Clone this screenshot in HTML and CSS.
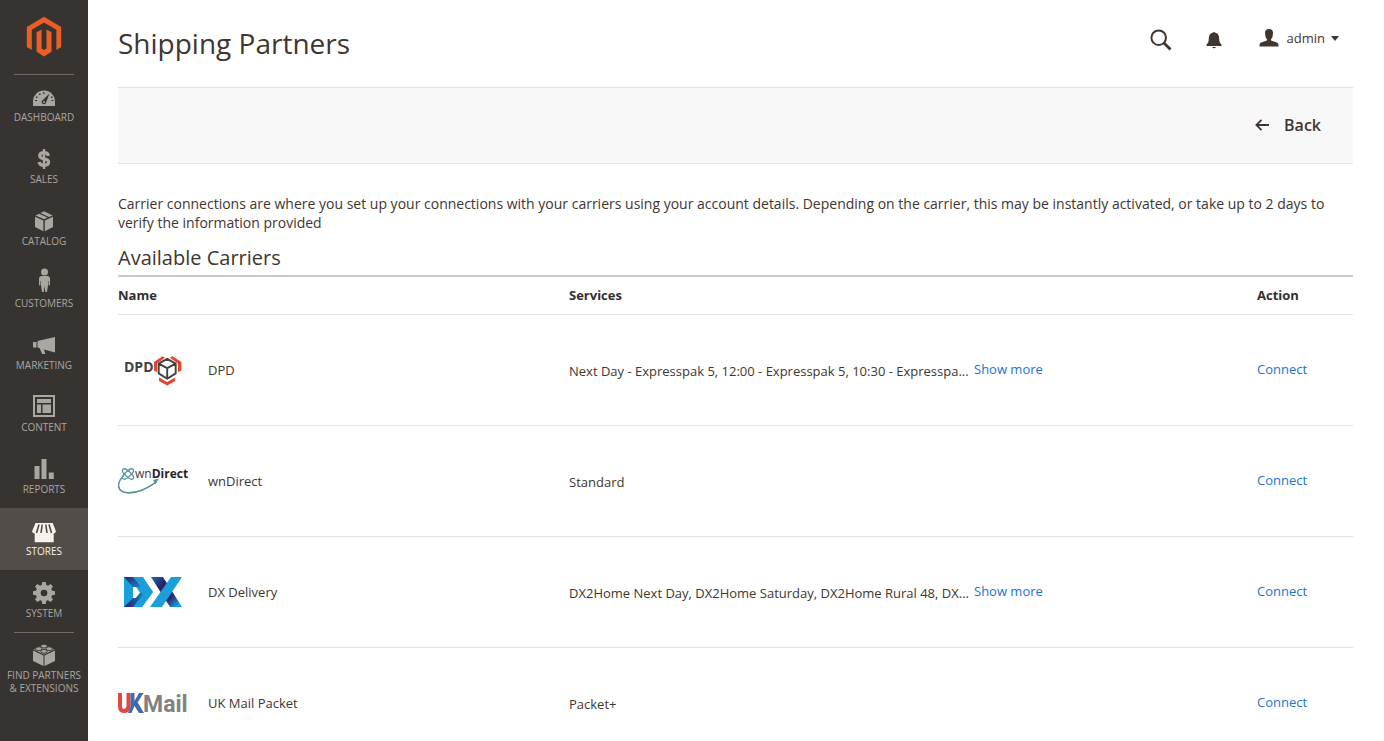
FILE: index.html
```html
<!DOCTYPE html>
<html lang="en">
<head>
<meta charset="utf-8">
<meta name="viewport" content="width=device-width, initial-scale=1">
<title>Shipping Partners</title>
<link rel="stylesheet" href="styles.css">
</head>
<body>
<div class="page">
  <aside class="sidebar">
    <a class="brand" href="#" aria-label="Home">
      <svg width="36" height="42" viewBox="0 0 36 42" fill="#eb5f25"><path d="M18 .8 35.200 11v20l-4.800 2.900V13.800L18 6.500 5.800 13.800v20.100L.8 31V11z"/><path d="M10.600 16.300 15.600 13.400v19.200l2.400 1.500 2.500-1.500V13.400l5 2.900v19.500L18 40.500l-7.400-4.700z"/></svg>
    </a>
    <nav class="menu">
      <a class="item" href="#">
        <svg class="icon" width="24" height="24" viewBox="0 0 24 24"><path fill="currentColor" d="M1 21v-4.500a11 11 0 0 1 22 0V21z"/><g fill="#373330"><path d="m17.500 8.500-3.300 8.700a2.300 2.300 0 1 1-3.300-2.300z"/><rect x="3" y="15" width="2" height="1"/><rect x="4" y="11.500" width="1.500" height="1.500"/><rect x="7" y="8.500" width="1.500" height="1.500"/><rect x="11" y="7.300" width="1.500" height="1.500"/><rect x="19" y="11.500" width="1.500" height="1.500"/><rect x="19.500" y="15" width="2" height="1"/></g><circle cx="12" cy="17" r="1" fill="currentColor"/></svg>
        <span>Dashboard</span>
      </a>
      <a class="item" href="#">
        <svg class="icon" width="24" height="24" viewBox="0 0 24 24" fill="none" stroke="currentColor"><path stroke-width="3.200" d="M16.500 8.800C16 6.700 14.300 5.700 12 5.700c-2.600 0-4.300 1.100-4.300 3.100 0 4.300 8.900 1.900 8.900 6.200 0 2.200-1.900 3.300-4.600 3.300-2.700 0-4.500-1.100-4.900-3.400"/><path stroke-width="2.400" d="M12 2v20"/></svg>
        <span>Sales</span>
      </a>
      <a class="item" href="#">
        <svg class="icon" width="24" height="24" viewBox="0 0 24 24" fill="currentColor"><path d="m3 7.800 8.400 3.700v10.800L3 18zM12.800 11.500 21 7.800V18l-8.200 4.300zM3.500 6.500 7 4.700l8.500 3.900-3.400 1.700zM8.400 4 12 2.200l8.700 4.200-3.700 1.600z"/></svg>
        <span>Catalog</span>
      </a>
      <a class="item" href="#">
        <svg class="icon tall" width="24" height="26" viewBox="0 0 24 26" fill="currentColor"><circle cx="12.500" cy="4" r="3.500"/><path d="M9 8h7q2 .5 2 2.500v6.500q-.7 1-1.400 0V13h-.5v3.500L15 24h-1.700l-.8-6-.8 6H10L8.900 16.500V13h-.5v4q-.8 1-1.400 0v-6.500Q7 8.500 9 8z"/></svg>
        <span>Customers</span>
      </a>
      <a class="item" href="#">
        <svg class="icon" width="24" height="24" viewBox="0 0 24 24" fill="currentColor"><path d="M1 9h3.500v5.500H1zM5.500 8 23 4v15.500l-11-3 1.400 4.500h-3.200L7.500 15l-2-.5z"/></svg>
        <span>Marketing</span>
      </a>
      <a class="item" href="#">
        <svg class="icon" width="24" height="24" viewBox="0 0 24 24"><path fill="none" stroke="currentColor" stroke-width="2" d="M2 1h20v20H2z"/><path fill="currentColor" d="M5 4h14v4H5zM5 9.500h4V18H5zM10.500 9.500H19V18h-8.500z"/></svg>
        <span>Content</span>
      </a>
      <a class="item" href="#">
        <svg class="icon" width="24" height="24" viewBox="0 0 24 24" fill="currentColor"><path d="M2.500 9h5v13h-5zM9.500 2h5v20h-5zM16.800 15.500h5V22h-5z"/></svg>
        <span>Reports</span>
      </a>
      <a class="item active" href="#" aria-current="page">
        <svg class="icon" width="24" height="24" viewBox="0 0 24 24"><path fill="currentColor" d="M3.500 4h17.200l3.300 8.500q-.8 2-2.300 2V23.300h-19v-8.800Q.7 14.500 0 12.500z"/><path fill="none" stroke="#524d49" stroke-width="1.600" d="M7 5.500 4.500 14M10.200 5.500 9 14M13.800 5.500l1.200 8.500M17 5.500l2.500 8.500"/></svg>
        <span>Stores</span>
      </a>
      <a class="item" href="#">
        <svg class="icon" width="24" height="24" viewBox="0 0 24 24"><g fill="currentColor"><circle cx="12" cy="12" r="8.300"/><path id="tooth" d="M9.500 5 10.300 1h3.400l.8 4v14l-.8 4h-3.400l-.8-4z"/><use href="#tooth" transform="rotate(45 12 12)"/><use href="#tooth" transform="rotate(90 12 12)"/><use href="#tooth" transform="rotate(135 12 12)"/></g><circle cx="12" cy="12" r="3.300" fill="#373330"/></svg>
        <span>System</span>
      </a>
      <a class="item partners" href="#">
        <svg class="icon" width="24" height="24" viewBox="0 0 24 24"><path fill="currentColor" d="m1 7.500 10.500 5V23L1 18zM12.500 12.500 23 7.500V18l-10.500 5zM1.800 6.600 12 2l10.200 4.600L12 11.600z"/><g fill="currentColor" stroke="#373330" stroke-width=".9"><ellipse cx="12" cy="3.100" rx="3.200" ry="1.900"/><ellipse cx="6.800" cy="5.700" rx="3.200" ry="1.900"/><ellipse cx="17.200" cy="5.700" rx="3.200" ry="1.900"/><ellipse cx="12" cy="8.300" rx="3.200" ry="1.900"/></g></svg>
        <span>Find Partners &amp; Extensions</span>
      </a>
    </nav>
  </aside>
  <main class="main">
    <header class="header">
      <h1 class="title">Shipping Partners</h1>
      <div class="tools">
        <button class="tool" type="button" aria-label="Search"><svg width="22" height="22" viewBox="0 0 22 22" fill="none" stroke="#41362f"><circle cx="8.700" cy="8.700" r="7.300" stroke-width="2"/><path d="m14 14 6.500 6.500" stroke-width="2.800"/></svg></button>
        <button class="tool" type="button" aria-label="Notifications"><svg width="16" height="18" viewBox="0 0 16 18" fill="#41362f"><path d="M7 1.500q1-1 2 0 4.200.8 4.200 6 0 4.500 2.300 6V15H.5v-1.500q2.300-1.500 2.300-6 0-5.200 4.200-6zM6 16h4q-2 2.500-4 0z"/></svg></button>
        <button class="tool account" type="button"><svg width="20" height="18" viewBox="0 0 20 18" fill="#41362f"><path d="M6 4q0-4 4-4t4 4q0 4-2 6.500v1l6 2q1.500.5 1.500 2.500v1.500H.5V16q0-2 1.500-2.500l6-2v-1Q6 8 6 4z"/></svg><span>admin</span><svg class="caret" width="8" height="5" viewBox="0 0 8 5" fill="#41362f"><path d="M0 0h8L4 5z"/></svg></button>
      </div>
    </header>
    <div class="actions">
      <button class="back" type="button"><svg width="14" height="12" viewBox="0 0 14 12" fill="none" stroke="#41362f" stroke-width="1.800"><path d="M14 6H1.500M6.500.8 1.400 6l5.100 5.200"/></svg><span>Back</span></button>
    </div>
    <p class="intro">Carrier connections are where you set up your connections with your carriers using your account details. Depending on the carrier, this may be instantly activated, or take up to 2 days to verify the information provided</p>
    <h2 class="subtitle">Available Carriers</h2>
    <table class="carriers">
      <thead>
        <tr><th class="col-name" scope="col">Name</th><th class="col-services" scope="col">Services</th><th class="col-action" scope="col">Action</th></tr>
      </thead>
      <tbody>
        <tr>
          <td><div class="carrier">
            <svg width="70" height="70" viewBox="0 0 70 70"><text class="logo-dpd" x="6" y="37">DPD</text><g transform="translate(-.5 3)"><path fill="#e2442f" d="m36.500 24 8.500-5.700 2.500 1.500-8 5.800v8.600L36.500 32.500zM63.900 24l-9-5.700-2.500 1.500 8 5.800v8.600l3.500-1.700zM41.500 39.500l8.200 4.500 8-4.500v3.600l-8 4.300-8.200-4.300z"/><path fill="#fff" stroke="#414042" stroke-width="1.900" stroke-linejoin="round" d="m49.700 20.800 8.500 4.800v9.800l-8.500 5.300-8.500-5.300v-9.800zM41.200 25.600l8.500 4.600 8.500-4.600M49.700 30.200v10.500"/></g></svg>
            <span>DPD</span></div></td>
          <td><div class="services"><span class="list">Next Day - Expresspak 5, 12:00 - Expresspak 5, 10:30 - Expresspa...</span><a href="#">Show more</a></div></td>
          <td><a class="connect" href="#">Connect</a></td>
        </tr>
        <tr>
          <td><div class="carrier">
            <svg width="70" height="70" viewBox="0 0 70 70"><g fill="none" stroke="#56929c" stroke-width="1.300"><ellipse cx="10" cy="28" rx="2.600" ry="7" transform="rotate(48 10 28)"/><ellipse cx="10" cy="28" rx="2.600" ry="7" transform="rotate(-48 10 28)"/><path stroke-width="1.600" d="M5.500 30C-2 37-1 46 9 46.800c11 .7 22-5.500 29.500-11"/></g><path fill="#56929c" d="m35 34 6-1.500-3.500 5.500z"/><text class="logo-wn" x="17" y="32">wn<tspan class="bold">Direct</tspan></text></svg>
            <span>wnDirect</span></div></td>
          <td><div class="services"><span class="list">Standard</span></div></td>
          <td><a class="connect" href="#">Connect</a></td>
        </tr>
        <tr>
          <td><div class="carrier">
            <svg width="70" height="70" viewBox="0 0 70 70"><defs><linearGradient id="fold" x1="0" y1="0" x2="1" y2="1"><stop offset="0" stop-color="#1b6fb4"/><stop offset=".3" stop-color="#28236e"/><stop offset=".65" stop-color="#28236e"/><stop offset=".9" stop-color="#1a9fdc"/></linearGradient><linearGradient id="shade" x1="0" y1="0" x2="1" y2="1"><stop offset="0" stop-color="#28236e"/><stop offset="1" stop-color="#1b84c8"/></linearGradient><linearGradient id="rise" x1="0" y1="1" x2="1" y2="0"><stop offset="0" stop-color="#27246c"/><stop offset="1" stop-color="#1b84c8"/></linearGradient></defs><path fill="#1b9fdb" fill-rule="evenodd" d="M6 20h18l11 15-11 15H6zM15 30v11h3l4-5.500-4-5.500z"/><path fill="url(#shade)" d="M6 20h9l8 10h-8z"/><path fill="url(#rise)" d="M6 50l9-9h3l5-6 3 4-9 11z"/><path fill="#1b9fdb" d="M17 20h8l10 15-11 15h-9l11-14z"/><path fill="url(#fold)" d="M33 20h12l19 30H52z"/><path fill="#1b9fdb" d="M53 20h11L44 50H32z"/></svg>
            <span>DX Delivery</span></div></td>
          <td><div class="services"><span class="list">DX2Home Next Day, DX2Home Saturday, DX2Home Rural 48, DX...</span><a href="#">Show more</a></div></td>
          <td><a class="connect" href="#">Connect</a></td>
        </tr>
        <tr>
          <td><div class="carrier">
            <svg width="70" height="70" viewBox="0 0 70 70"><path fill="none" stroke="#e2483d" stroke-width="4" d="M2 25v13.500q0 4.500 4 4.500t4.500-4.500V25"/><path fill="#426bad" d="M12.500 25h4v8L21 25h4.500l-5.800 9.500L26 45h-5l-4.500-7-3 7H10l2.500-6z"/><text class="logo-uk" x="25" y="44">Mail</text></svg>
            <span>UK Mail Packet</span></div></td>
          <td><div class="services"><span class="list">Packet+</span></div></td>
          <td><a class="connect" href="#">Connect</a></td>
        </tr>
      </tbody>
    </table>
  </main>
</div>
</body>
</html>
```
FILE: styles.css
```css
* { box-sizing: border-box; }

body {
  margin: 0;
  background: #fff;
  color: #41362f;
  font-family: "Open Sans", "Noto Sans", sans-serif;
  font-size: 14px;
}

svg { display: block; flex: none; }
a { text-decoration: none; color: #1a73d2; }
button { border: 0; padding: 0; background: none; color: inherit; font: inherit; cursor: pointer; }

.page { display: flex; height: 100vh; overflow: hidden; }

.sidebar { flex: none; width: 88px; background: #373330; }
.brand { display: flex; justify-content: center; height: 75px; margin: 0 14px; padding-top: 16px; border-bottom: 1px solid #736963; }

.menu { display: flex; flex-direction: column; margin-top: -1px; }
.item {
  display: flex;
  flex-direction: column;
  align-items: center;
  gap: 2px;
  height: 62px;
  padding-top: 11px;
  color: #aaa6a0;
  font-size: 10px;
  line-height: 13px;
  text-align: center;
  text-transform: uppercase;
}
.icon { height: 24px; }
.icon.tall { height: 26px; margin: -3px 0 1px; }
.item.active { background: #524d49; color: #f7f3eb; }
.partners { position: relative; height: auto; padding-left: 4px; padding-right: 4px; }
.partners::before { content: ""; position: absolute; top: 0; left: 14px; right: 14px; border-top: 1px solid #736963; }

.main { flex: 1; min-width: 0; padding: 0 31px 0 30px; }

.header { display: flex; align-items: center; justify-content: space-between; height: 87px; }
.title { margin: 0; padding-bottom: 2px; font-size: 28px; font-weight: 400; line-height: 36px; }
.tools { display: flex; align-items: center; padding: 0 14px 8px 0; gap: 34px; }
.account { display: flex; align-items: center; gap: 8px; margin-left: 3px; padding-bottom: 3px; font-size: 13px; line-height: 18px; }
.caret { margin-left: -2px; }

.actions { display: flex; justify-content: flex-end; align-items: center; height: 77px; padding: 0 32px 2px; background: #f8f8f8; border: solid #e3e3e3; border-width: 1px 0; }
.back { display: flex; align-items: center; gap: 15px; font-size: 16px; font-weight: 600; line-height: 22px; }

.intro { margin: 30px 0 0; line-height: 19px; }
.subtitle { margin: 12px 0 4px; font-size: 20px; font-weight: 400; line-height: 27px; }

.carriers { width: 100%; border-collapse: collapse; table-layout: fixed; border-top: 2px solid #ccc; font-size: 13px; line-height: 18px; }
.carriers tr { border-bottom: 1px solid #e3e3e3; }
.carriers th { height: 38px; padding: 0; color: #303030; font-weight: 700; text-align: left; }
.carriers td { height: 111px; padding: 0; }
.col-services { width: 688px; }
.col-action { width: 96px; }
.carrier { display: flex; align-items: center; gap: 20px; }
.services { display: flex; gap: 4px; }
.list { flex: none; min-width: 401px; padding-top: 2px; }
.connect { display: block; padding-bottom: 2px; }

.logo-dpd { fill: #414042; font: 700 14px "Open Sans", sans-serif; }
.logo-wn { fill: #3b3b3d; font: 400 12px "Open Sans", sans-serif; }
.logo-wn .bold { fill: #252527; font-weight: 700; }
.logo-uk { fill: #828282; font: 700 23px Roboto, sans-serif; }
```
